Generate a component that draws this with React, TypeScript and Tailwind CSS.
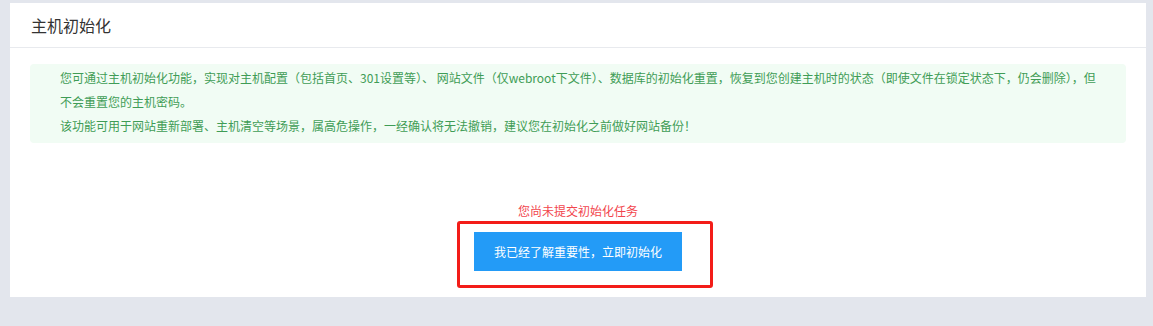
import React from 'react';

const font = { fontFamily: '"Noto Sans CJK SC", "Noto Sans", sans-serif' };

const HostInit = () => {
  return (
    <div className="min-h-[326px] bg-[#e3e6ed] pt-[3px] pl-[10px] pr-[7px] pb-[29px]" style={font}>
      <div className="bg-white">
        {/* Header */}
        <div className="h-[45px] flex items-center pl-[21px] border-b border-[#e8eaee]">
          <h2 className="text-[16px] text-[#333] leading-none">主机初始化</h2>
        </div>

        {/* Notice */}
        <div className="mx-[20px] mt-[16px] rounded-[4px] bg-[#f1fcf4] pl-[30px] pr-[20px] pt-[2px] pb-[5px] text-[12px] leading-[24px] text-[#3f9c56]">
          <p className="whitespace-nowrap">
            您可通过主机初始化功能，实现对主机配置（包括首页、301设置等）、 网站文件（仅webroot下文件）、数据库的初始化重置，恢复到您创建主机时的状态（即使文件在锁定状态下，仍会删除），但
            <br />
            不会重置您的主机密码。
          </p>
          <p className="whitespace-nowrap">该功能可用于网站重新部署、主机清空等场景，属高危操作，一经确认将无法撤销，建议您在初始化之前做好网站备份！</p>
        </div>

        {/* Action */}
        <div className="flex flex-col items-center pt-[60px] pb-[26px]">
          <p className="text-[12px] leading-[16px] text-[#f2454d]">您尚未提交初始化任务</p>
          <div className="relative mt-[13px]">
            <button className="w-[208px] h-[39px] bg-[#239bf7] text-white text-[12px]">
              我已经了解重要性，立即初始化
            </button>
            <div className="absolute -left-[17px] -top-[11px] w-[256px] h-[67px] border-[3px] border-[#f31d18] rounded-[3px] pointer-events-none" />
          </div>
        </div>
      </div>
    </div>
  );
};

export default function App() {
  return <HostInit />;
}
